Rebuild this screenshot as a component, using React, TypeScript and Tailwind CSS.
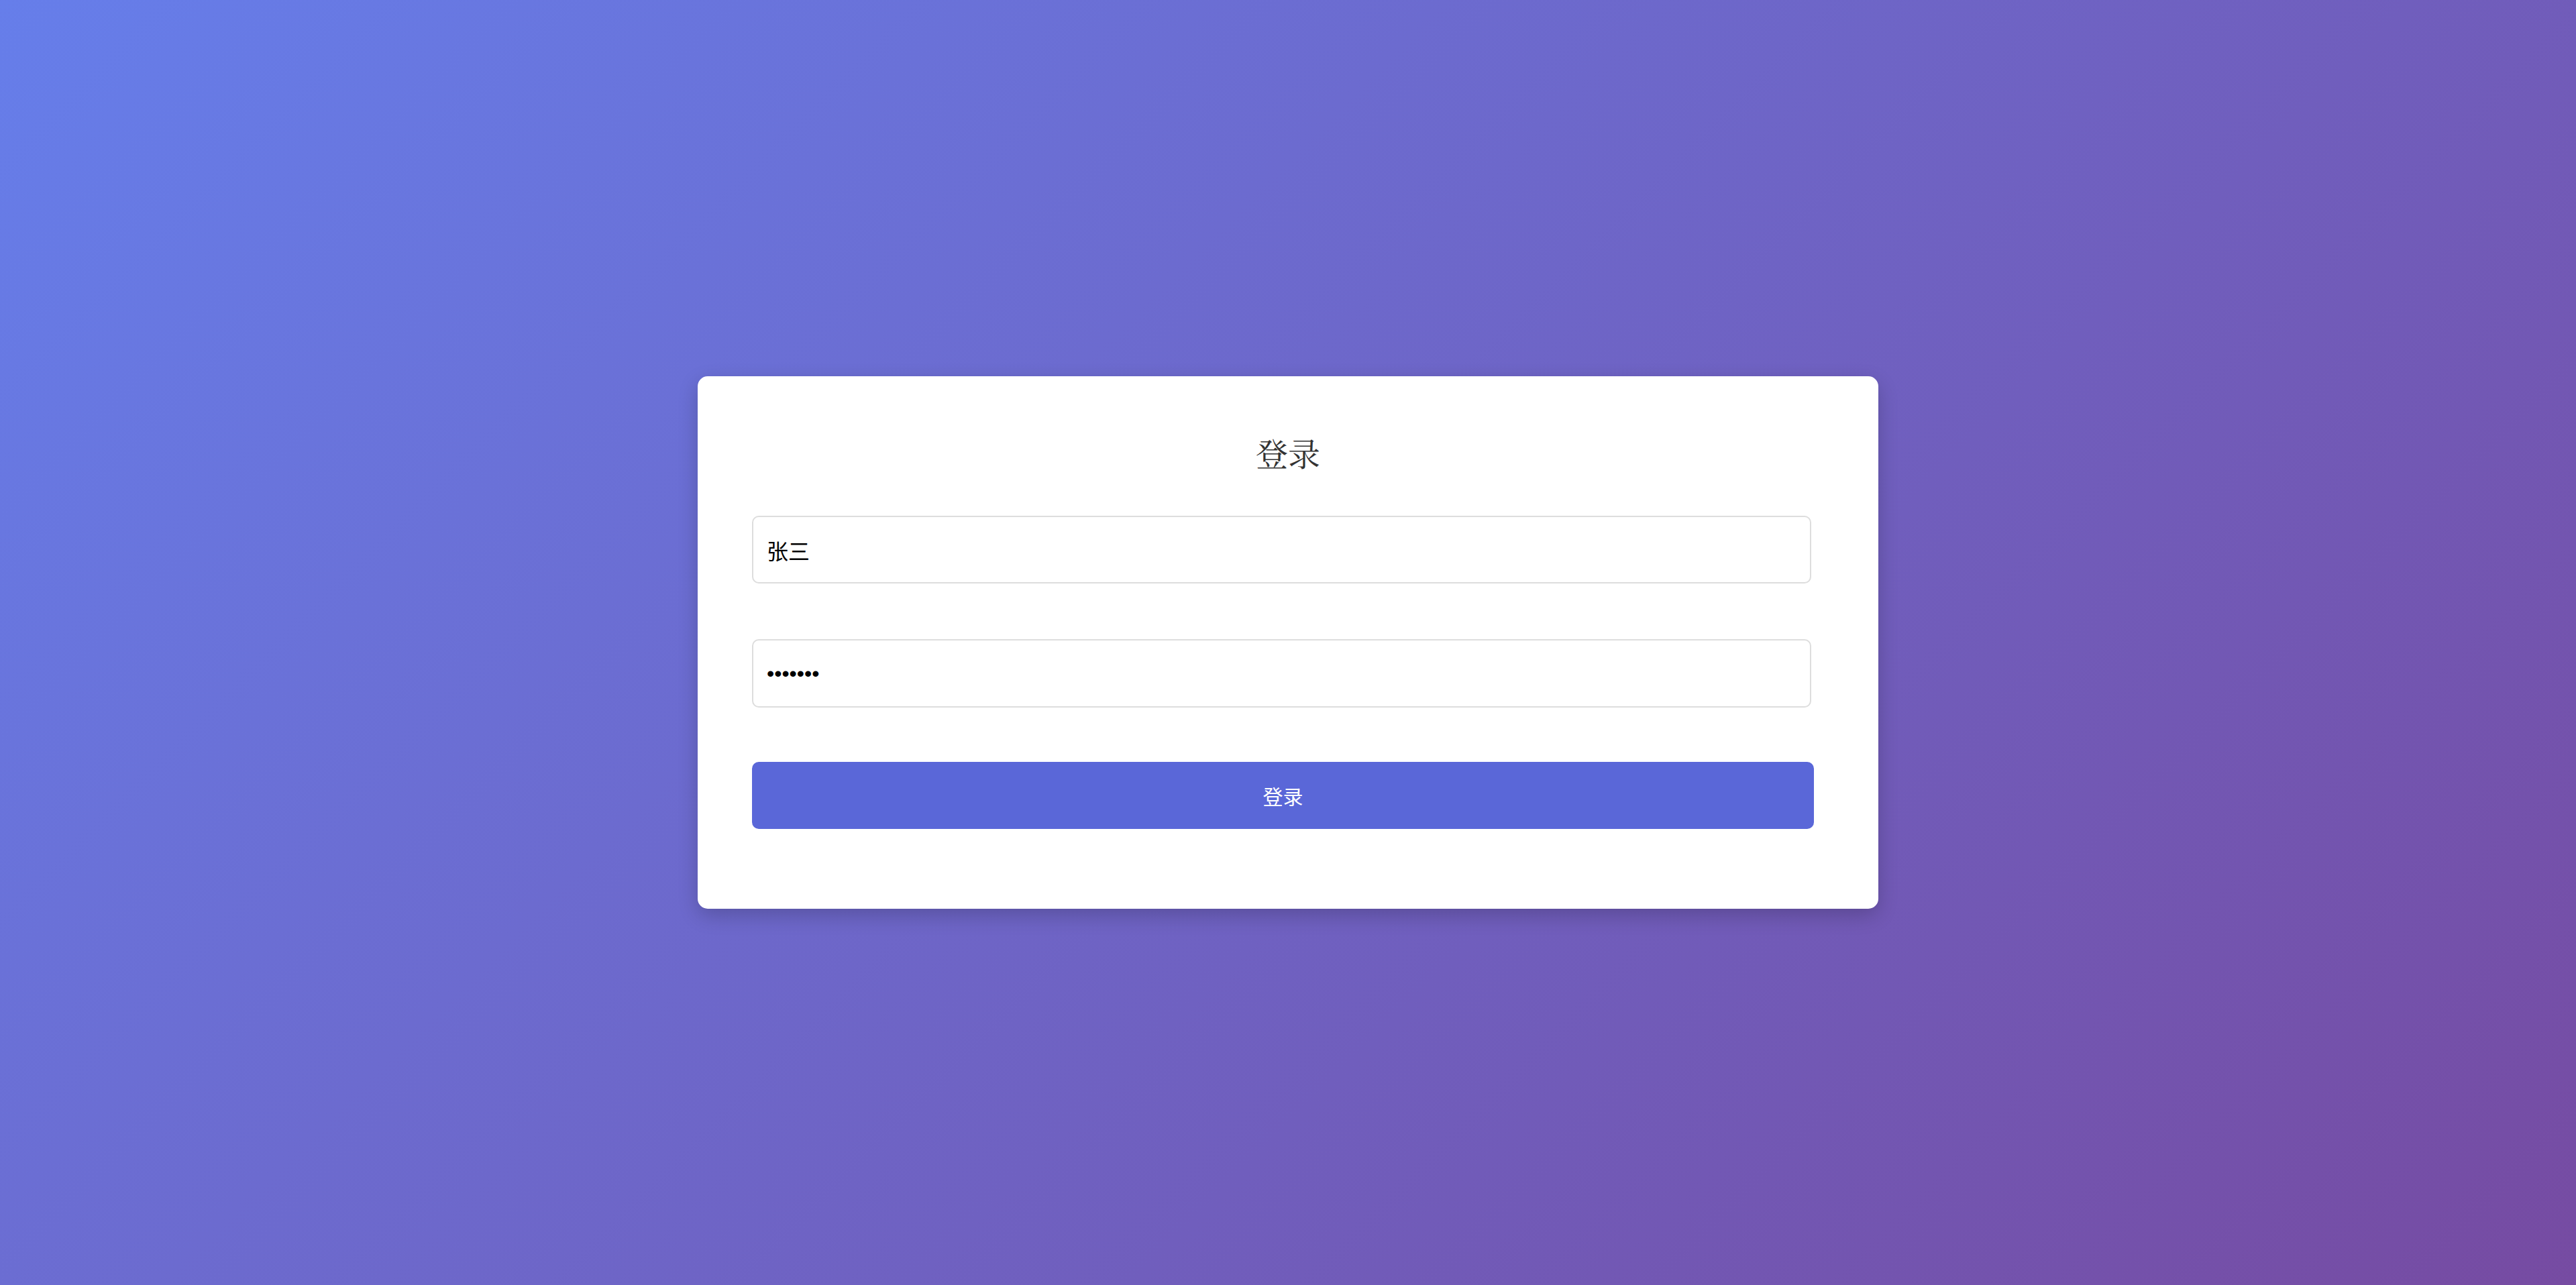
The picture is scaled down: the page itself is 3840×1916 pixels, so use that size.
export default function App() {
    return (
        <div className="min-h-screen w-full flex items-center justify-center bg-[linear-gradient(135deg,#667eea_0%,#764ba2_100%)]">
            <LoginCard />
        </div>
    );
}

function LoginCard() {
    return (
        <div lang="zh-CN" className="w-[1760px] bg-white rounded-[15px] px-[81px] pt-[78px] pb-[119px] shadow-[0_10px_30px_rgba(0,0,0,0.2)]">
            <h2 className="text-center text-[48px] leading-[72px] text-[#333] font-normal font-['Noto_Serif_CJK_SC','AR_PL_UMing_CN',serif] mb-[58px]">
                登录
            </h2>
            <input
                type="text"
                defaultValue="张三"
                className="block w-[1579px] h-[101px] px-[20px] border-2 border-[#ddd] rounded-[10px] text-[32px] text-black outline-none font-['Noto_Sans_CJK_SC',sans-serif] mb-[83px]"
            />
            <input
                type="password"
                defaultValue="1234567"
                className="block w-[1579px] h-[102px] px-[20px] border-2 border-[#ddd] rounded-[10px] text-[32px] text-black outline-none font-['Liberation_Sans','Noto_Sans_CJK_SC',sans-serif] mb-[81px]"
            />
            <button className="block w-[1583px] h-[100px] bg-[#5a67d8] text-white rounded-[10px] text-[30px] font-['Noto_Sans_CJK_SC',sans-serif]">
                登录
            </button>
        </div>
    );
}
